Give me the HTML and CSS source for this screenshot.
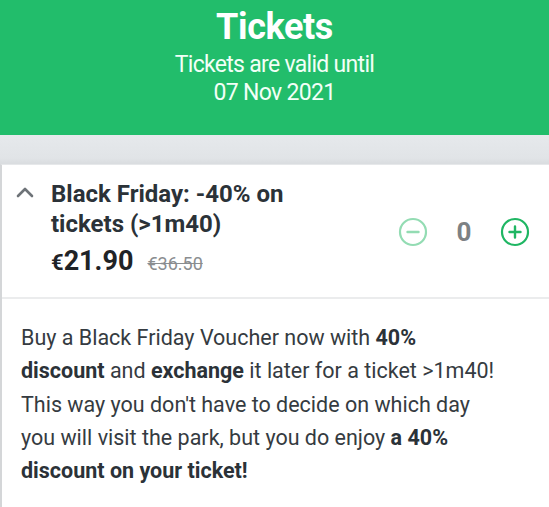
FILE: index.html
```html
<!DOCTYPE html>
<html>
<head>
<meta charset="utf-8">
<link rel="stylesheet" href="styles.css">
</head>
<body>
<header class="hero">
  <h1 class="hero-title">Tickets</h1>
  <p class="hero-sub">Tickets are valid until<br>07 Nov 2021</p>
</header>
<div class="band"></div>
<section class="card">
  <div class="card-head">
    <svg class="chevron" width="18" height="12" viewBox="0 0 18 12"><path d="M2 10 L9 3 L16 10" fill="none" stroke="#6e7378" stroke-width="2.6" stroke-linecap="round" stroke-linejoin="round"/></svg>
    <div class="info">
      <h2 class="name">Black Friday: -40% on tickets (&gt;1m40)</h2>
      <div class="prices"><span class="price"><span class="cur">€</span>21.90</span><span class="old">€36.50</span></div>
    </div>
    <div class="qty">
      <svg class="btn minus" width="30" height="30" viewBox="0 0 30 30"><circle cx="15" cy="15" r="13" fill="none" stroke="currentColor" stroke-width="2.2"/><path d="M9.5 15 H20.5" stroke="currentColor" stroke-width="2.4" stroke-linecap="round"/></svg>
      <span class="count">0</span>
      <svg class="btn plus" width="30" height="30" viewBox="0 0 30 30"><circle cx="15" cy="15" r="13" fill="none" stroke="currentColor" stroke-width="2.2"/><path d="M9.5 15 H20.5 M15 9.5 V20.5" stroke="currentColor" stroke-width="2.4" stroke-linecap="round"/></svg>
    </div>
  </div>
  <div class="card-body">
    <p>Buy a Black Friday Voucher now with <b>40% discount</b> and <b>exchange</b> it later for a ticket &gt;1m40! This way you don't have to decide on which day you will visit the park, but you do enjoy <b>a 40% discount on your ticket!</b></p>
  </div>
</section>
</body>
</html>
```
FILE: styles.css
```css
* { box-sizing: border-box; }
html, body { margin: 0; padding: 0; background: #fff; }
body { font-family: Roboto, "Liberation Sans", sans-serif; width: 549px; overflow: hidden; }

.hero {
  background: #22bd6b;
  color: #fff;
  text-align: center;
  height: 135px;
  padding-top: 7px;
}
.hero-title { margin: 0; font-size: 36px; font-weight: 700; line-height: 40px; letter-spacing: -0.4px; }
.hero-sub { margin: 4px 0 0; font-size: 23px; line-height: 28px; letter-spacing: -0.7px; color: #f2fff7; }

.band {
  height: 29px;
  background: linear-gradient(#e6e9ec, #e1e4e7 80%, #d9dcdf);
}

.card {
  background: #fff;
  border-left: 2px solid #d4d6d8;
  border-top: 1px solid #e6e8ea;
}
.card-head {
  display: flex;
  align-items: flex-start;
  padding: 15px 0 0 14px;
  height: 134px;
  border-bottom: 2px solid #ebeced;
}
.chevron { margin-top: 6px; flex: none; }
.info { margin-left: 17px; width: 260px; }
.name { margin: 0; font-size: 24px; font-weight: 700; line-height: 29.5px; color: #2b3238; }
.prices { display: flex; align-items: baseline; margin-top: 6px; line-height: 32px; }
.price { font-size: 27px; font-weight: 700; color: #1f2327; }
.cur { font-size: 22px; }
.old { margin-left: 14px; font-size: 18px; color: #8a8d90; text-decoration: line-through; }

.qty { display: flex; align-items: center; margin-left: auto; margin-right: 19px; margin-top: 37px; }
.btn { display: block; }
.minus { color: #93dcb3; }
.plus { color: #1fb663; }
.count { font-size: 26px; font-weight: 700; color: #7d8184; width: 72px; text-align: center; }

.card-body { padding: 22px 50px 40px 19px; }
.card-body p { margin: 0; font-size: 21.5px; line-height: 33.25px; color: #353b41; }
.card-body b { color: #2b3238; }
```
